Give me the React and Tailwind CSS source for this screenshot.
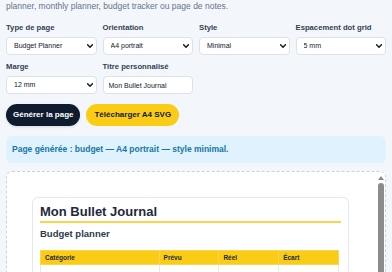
import { useState } from 'react'

function Chevron() {
  return (
    <svg className="pointer-events-none absolute right-[4px] top-1/2 -translate-y-1/2 w-[6px] h-[4px]" viewBox="0 0 10 6" fill="none">
      <path d="M1 1l4 4 4-4" stroke="#111827" strokeWidth="2.4" strokeLinecap="round" strokeLinejoin="round" />
    </svg>
  )
}

function Field({ label, children }) {
  return (
    <div className="flex flex-col gap-[4px]">
      <label className="block text-[7.7px] leading-[10px] font-bold text-[#334155]">{label}</label>
      {children}
    </div>
  )
}

function Select({ value, options, onChange }) {
  return (
    <div className="relative">
      <select
        value={value}
        onChange={e => onChange(e.target.value)}
        className="block appearance-none w-full h-[18px] rounded-[4px] border border-[#dbe2ea] bg-white pl-[7px] pr-[12px] text-[7px] text-[#111827] outline-none"
      >
        {options.map(o => <option key={o}>{o}</option>)}
      </select>
      <Chevron />
    </div>
  )
}

export default function App() {
  const [type, setType] = useState('Budget Planner')
  const [orientation, setOrientation] = useState('A4 portrait')
  const [style, setStyle] = useState('Minimal')
  const [spacing, setSpacing] = useState('5 mm')
  const [marge, setMarge] = useState('12 mm')
  const [title, setTitle] = useState('Mon Bullet Journal')

  const rows = ['', '', '', '', '', '', '', '']

  return (
    <div className="min-h-screen bg-[#f3f7fb] px-[6px] font-['Liberation_Sans',Arial,sans-serif]">
      <p className="text-[8.5px] leading-[12px] text-[#64748b] whitespace-nowrap">
        planner, monthly planner, budget tracker ou page de notes.
      </p>

      {/* Options */}
      <div className="mt-[11px] grid grid-cols-4 gap-x-[6px] gap-y-[7px]">
        <Field label="Type de page">
          <Select value={type} onChange={setType} options={['Budget Planner', 'Daily planner', 'Weekly planner', 'Monthly planner', 'Notes']} />
        </Field>
        <Field label="Orientation">
          <Select value={orientation} onChange={setOrientation} options={['A4 portrait', 'A4 paysage']} />
        </Field>
        <Field label="Style">
          <Select value={style} onChange={setStyle} options={['Minimal', 'Classique', 'Coloré']} />
        </Field>
        <Field label="Espacement dot grid">
          <Select value={spacing} onChange={setSpacing} options={['4 mm', '5 mm', '6 mm']} />
        </Field>
        <Field label="Marge">
          <Select value={marge} onChange={setMarge} options={['8 mm', '10 mm', '12 mm', '15 mm']} />
        </Field>
        <Field label="Titre personnalisé">
          <input
            value={title}
            onChange={e => setTitle(e.target.value)}
            className="block w-full h-[18px] rounded-[4px] border border-[#dbe2ea] bg-white px-[5px] text-[7px] text-[#111827] outline-none"
          />
        </Field>
      </div>

      {/* Buttons */}
      <div className="mt-[10px] flex gap-[6px]">
        <button className="h-[22px] px-[7px] rounded-full bg-[#0f1b2e] text-white text-[8px] font-bold shadow-sm">
          Générer la page
        </button>
        <button className="h-[22px] px-[8px] rounded-full bg-[#facc15] text-[#111827] text-[8px] font-bold">
          Télécharger A4 SVG
        </button>
      </div>

      {/* Status */}
      <div className="mt-[10px] h-[27px] flex items-center rounded-[6px] bg-[#dff2fd] px-[6px] text-[8.5px] font-bold text-[#1677a6]">
        Page générée : budget — A4 portrait — style minimal.
      </div>

      {/* Preview */}
      <div className="mt-[8px] h-[300px] flex overflow-hidden rounded-[6px] border border-dashed border-[#c8d2de] bg-white">
        <div className="flex-1 pl-[25px] pt-[25px]">
          <div className="w-[317px] rounded-[6px] border border-[#e2e8f0] bg-white px-[7px] pt-[6px] pb-[10px]">
            <h1 className="text-[13px] leading-[16px] font-bold text-[#1e2a3b] border-b-2 border-[#fcd34d] pb-[1px]">
              {title}
            </h1>
            <h2 className="mt-[5px] text-[9.5px] leading-[12px] font-bold text-[#2d3a4b]">Budget planner</h2>
            <table className="mt-[10px] w-[299px] border-collapse text-[6.5px] text-[#1f2937]">
              <thead>
                <tr className="bg-[#facc15] h-[14px]">
                  <th className="w-[119px] border border-[#f7d652] text-left font-bold pl-[4px]">Catégorie</th>
                  <th className="w-[60px] border border-[#f7d652] text-left font-bold pl-[4px]">Prévu</th>
                  <th className="w-[60px] border border-[#f7d652] text-left font-bold pl-[4px]">Réel</th>
                  <th className="w-[60px] border border-[#f7d652] text-left font-bold pl-[4px]">Écart</th>
                </tr>
              </thead>
              <tbody>
                {rows.map((r, i) => (
                  <tr key={i} className="h-[16px]">
                    <td className="border border-[#e5e9ef]"></td>
                    <td className="border border-[#e5e9ef]"></td>
                    <td className="border border-[#e5e9ef]"></td>
                    <td className="border border-[#e5e9ef]"></td>
                  </tr>
                ))}
              </tbody>
            </table>
          </div>
        </div>
        {/* scrollbar */}
        <div className="w-[8px] flex flex-col items-center pt-[4px] gap-[3px] bg-white">
          <svg className="w-[6px] h-[4px]" viewBox="0 0 6 4">
            <path d="M3 0L6 4H0z" fill="#8a8a8a" />
          </svg>
          <div className="w-[6px] h-[200px] rounded-[3px] bg-[#8c8c8c]"></div>
        </div>
      </div>
    </div>
  )
}
